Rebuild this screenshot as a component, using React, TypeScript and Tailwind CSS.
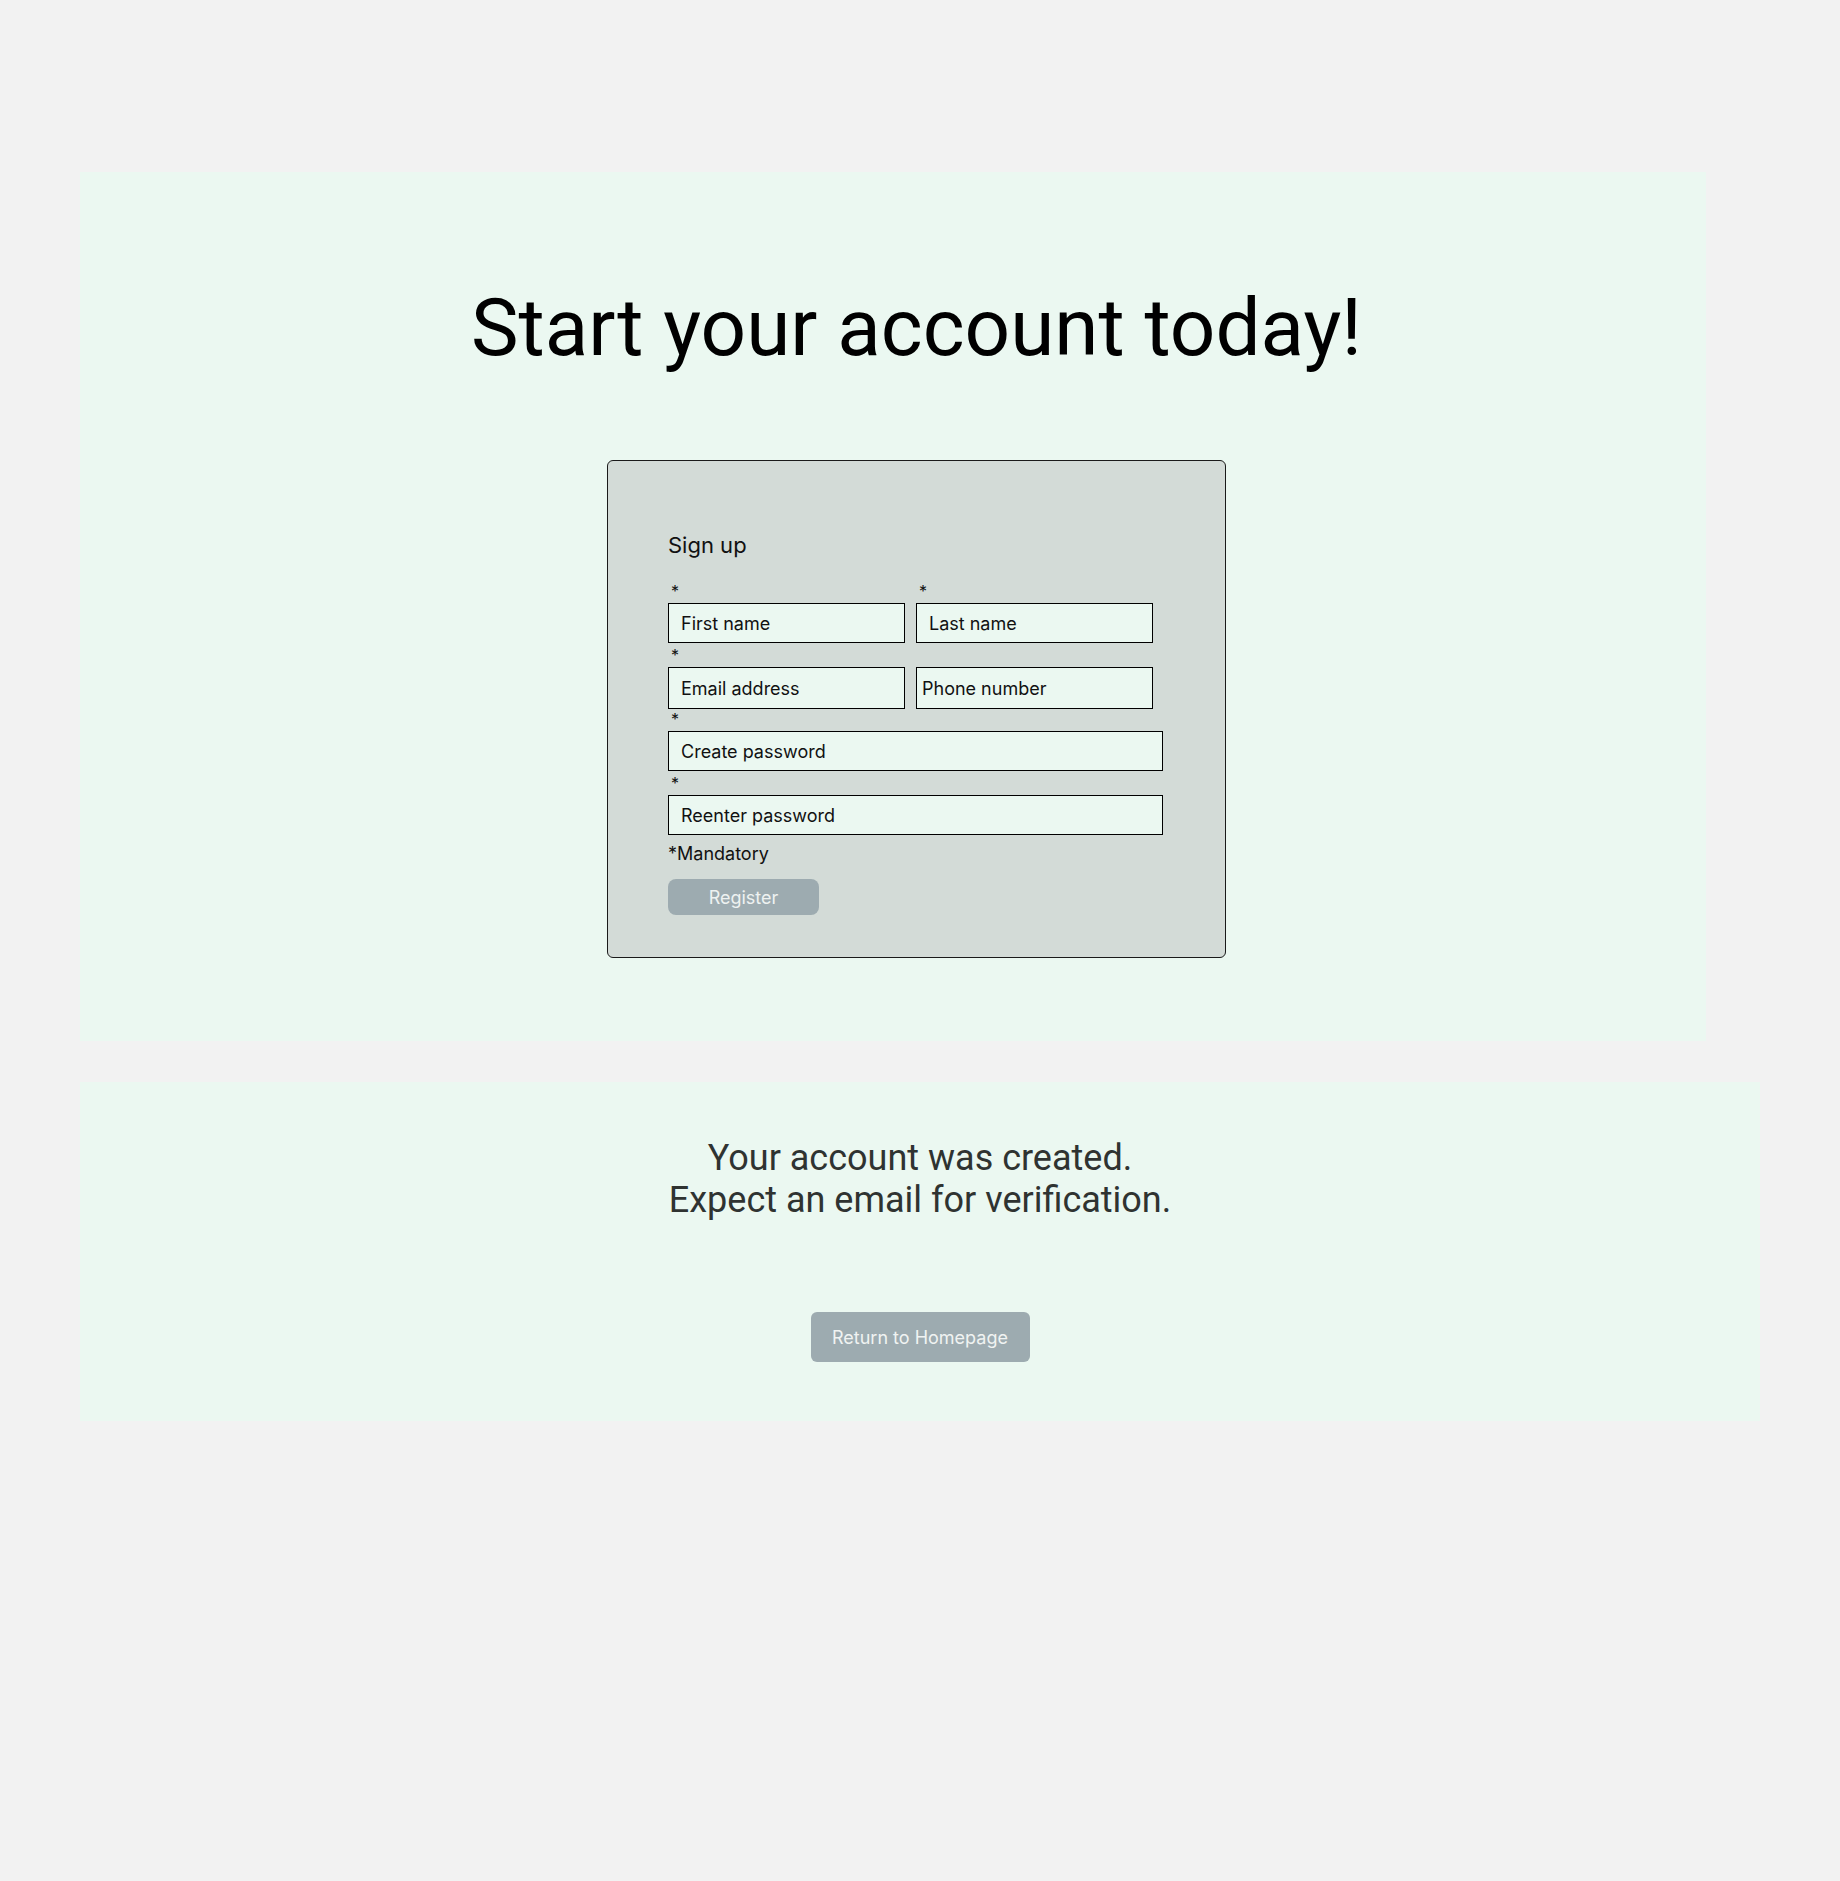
import React from "react";

type Field = {
  label: string;
  required: boolean;
  width: string;
  height: string;
  pad: string;
};

const rowOne: Field[] = [
  { label: "First name", required: true, width: "w-[237px]", height: "h-[40px]", pad: "pl-[12px]" },
  { label: "Last name", required: true, width: "w-[237px]", height: "h-[40px]", pad: "pl-[12px]" },
];

const rowTwo: Field[] = [
  { label: "Email address", required: true, width: "w-[237px]", height: "h-[42px]", pad: "pl-[12px]" },
  { label: "Phone number", required: false, width: "w-[237px]", height: "h-[42px]", pad: "pl-[5px]" },
];

const rowThree: Field[] = [
  { label: "Create password", required: true, width: "w-[495px]", height: "h-[40px]", pad: "pl-[12px]" },
];

const rowFour: Field[] = [
  { label: "Reenter password", required: true, width: "w-[495px]", height: "h-[40px]", pad: "pl-[12px]" },
];

function FieldBox({ field }: { field: Field }) {
  return (
    <div className="flex flex-col">
      <div className="h-[24px] pt-[4px] pl-[3px] text-[16px] leading-[16px] text-[#111]">
        {field.required ? "*" : "\u00a0"}
      </div>
      <input
        type="text"
        placeholder={field.label}
        className={`${field.width} ${field.height} ${field.pad} border-[1.5px] border-black bg-[#ebf8f1] text-[18px] text-[#111] placeholder:text-[#111] outline-none`}
      />
    </div>
  );
}

function Row({ fields, gap }: { fields: Field[]; gap: string }) {
  return (
    <div className={`flex ${gap}`}>
      {fields.map((f) => (
        <FieldBox key={f.label} field={f} />
      ))}
    </div>
  );
}

export default function App() {
  return (
    <div
      className="min-h-screen bg-[#f2f2f2] pt-[172px] pl-[80px] pb-[460px]"
      style={{ fontFamily: "Inter, 'Noto Sans', sans-serif" }}
    >
      {/* sign up panel */}
      <section className="w-[1626px] h-[869px] bg-[#ebf8f1] pt-[109px] pl-[47px] flex flex-col items-center">
        <h1
          className="text-[80px] leading-[94px] text-black"
          style={{ fontFamily: "Roboto, sans-serif" }}
        >
          Start your account today!
        </h1>

        <div className="mt-[85px] w-[619px] h-[498px] rounded-[6px] border border-[#1a1a1a] bg-[#d3dbd7] pt-[70px] pl-[60px]">
          <h2 className="text-[22px] leading-[28px] text-[#111]">Sign up</h2>

          <div className="mt-[20px] flex flex-col">
            <Row fields={rowOne} gap="gap-[11px]" />
            <Row fields={rowTwo} gap="gap-[11px]" />
            <div className="-mt-[2px]">
              <Row fields={rowThree} gap="gap-0" />
            </div>
            <Row fields={rowFour} gap="gap-0" />
          </div>

          <p className="mt-[7px] text-[18px] leading-[24px] text-[#111]">*Mandatory</p>

          <button className="mt-[13px] w-[151px] h-[36px] rounded-[8px] bg-[#9dabb0] text-[18px] text-[#eef2f1]">
            Register
          </button>
        </div>
      </section>

      {/* confirmation panel */}
      <section className="mt-[41px] w-[1680px] h-[339px] bg-[#ebf8f1] pt-[55px] flex flex-col items-center">
        <p
          className="text-center text-[36px] leading-[42px] text-[#2f3331]"
          style={{ fontFamily: "Roboto, sans-serif" }}
        >
          Your account was created.
          <br />
          Expect an email for verification.
        </p>
        <button className="mt-[91px] w-[219px] h-[50px] rounded-[6px] bg-[#9dabb0] text-[18px] text-[#f0f3f2]">
          Return to Homepage
        </button>
      </section>
    </div>
  );
}
